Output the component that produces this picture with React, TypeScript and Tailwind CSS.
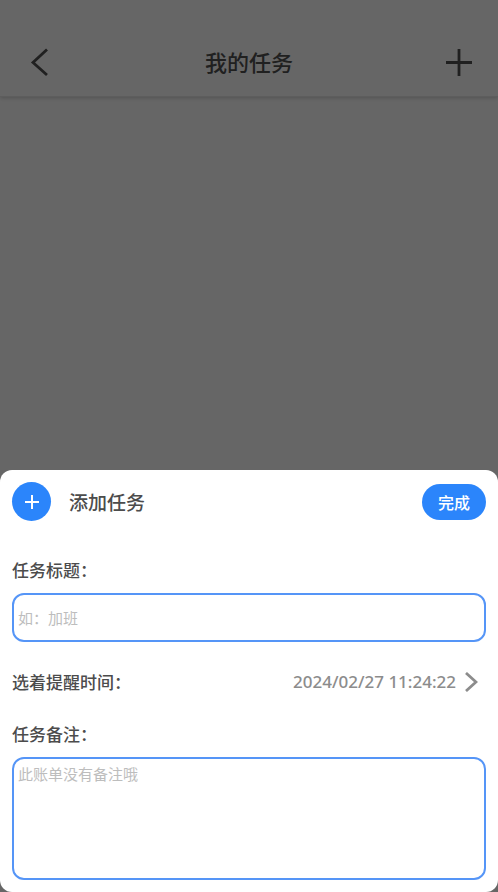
import { useState } from 'react'

export default function App() {
  const [title, setTitle] = useState('')
  const [note, setNote] = useState('')

  return (
    <div lang="zh-CN" className="min-h-screen bg-white font-['Noto_Sans_CJK_SC',sans-serif]">
      {/* Page header */}
      <header className="flex h-[97px] items-end justify-between border-b border-[#e8e8e8] bg-white px-6 pb-3 text-[#505050] shadow-[0_1px_4px_rgba(0,0,0,0.2)]">
        <button aria-label="返回" className="flex h-11 w-8 items-center justify-center">
          <svg width="32" height="32" viewBox="0 0 32 32" fill="none" stroke="currentColor" strokeWidth="2.8">
            <path d="M23 3.5 9 16.5 23 29" />
          </svg>
        </button>
        <h1 className="text-[22px] leading-[46px] font-medium">我的任务</h1>
        <button aria-label="新建" className="flex h-11 w-8 items-center justify-center">
          <svg width="32" height="32" viewBox="0 0 32 32" fill="none" stroke="currentColor" strokeWidth="2.8">
            <path d="M17 3v27M4 16.5h26" />
          </svg>
        </button>
      </header>

      {/* Bottom sheet */}
      <div className="fixed inset-0 flex items-end bg-black/60">
        <form
          className="w-full rounded-xl bg-white p-3 text-[#4c4c4c]"
          onSubmit={(e) => e.preventDefault()}
        >
          <div className="flex items-center">
            <span className="flex size-[39px] items-center justify-center rounded-full bg-[#2b85fb] text-white">
              <svg width="16" height="16" viewBox="0 0 16 16" fill="none" stroke="currentColor" strokeWidth="2">
                <path d="M8 1v14M1 8h14" />
              </svg>
            </span>
            <h2 className="ml-[18px] text-[19px] leading-7 font-medium">添加任务</h2>
            <button type="submit" className="ml-auto h-9 rounded-full bg-[#2b85fb] px-4 text-base font-medium text-white">
              完成
            </button>
          </div>

          <label htmlFor="title" className="mt-[37px] block text-[17px] leading-6 font-medium">任务标题：</label>
          <input
            id="title"
            value={title}
            onChange={(e) => setTitle(e.target.value)}
            placeholder="如：加班"
            className="mt-[11px] block h-[49px] w-full rounded-xl border-2 border-[#5595f7] px-1 text-[15px] outline-none placeholder:text-[#bdbdbd]"
          />

          <div className="mt-7 flex items-center justify-between text-[17px] leading-6 font-medium">
            <span id="remind">选着提醒时间：</span>
            <button type="button" aria-describedby="remind" className="flex items-center gap-2 font-['Noto_Sans',sans-serif] text-[17px] leading-6 font-medium text-[#8c8c8c]">
              2024/02/27 11:24:22
              <svg className="mr-2" width="14" height="20" viewBox="0 0 14 20" fill="none" stroke="currentColor" strokeWidth="2.8">
                <path d="M2 1l10 9-10 9" />
              </svg>
            </button>
          </div>

          <label htmlFor="note" className="mt-7 block text-[17px] leading-6 font-medium">任务备注：</label>
          <textarea
            id="note"
            value={note}
            onChange={(e) => setNote(e.target.value)}
            placeholder="此账单没有备注哦"
            className="mt-[11px] block h-[123px] w-full resize-none rounded-xl border-2 border-[#5595f7] px-1 py-[3px] text-[15px] leading-6 outline-none placeholder:text-[#bdbdbd]"
          />
        </form>
      </div>
    </div>
  )
}
